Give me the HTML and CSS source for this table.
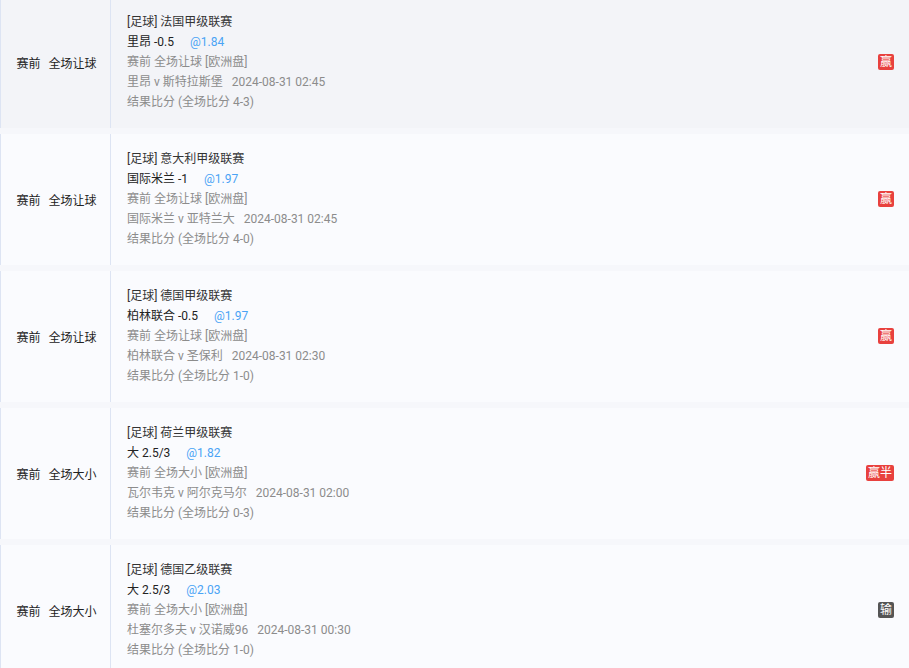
FILE: index.html
```html
<!DOCTYPE html>
<html lang="zh">
<head>
<meta charset="utf-8">
<link rel="stylesheet" href="styles.css">
</head>
<body>
<div class="list">
  <div class="row active">
    <div class="type"><span>赛前</span><span>全场让球</span></div>
    <div class="info">
      <div class="title">[足球] 法国甲级联赛</div>
      <div class="bet"><span>里昂 -0.5</span><span class="odds">@1.84</span></div>
      <div class="sub">赛前 全场让球 [欧洲盘]</div>
      <div class="sub"><span>里昂 v 斯特拉斯堡</span><span class="date">2024-08-31 02:45</span></div>
      <div class="sub">结果比分 (全场比分 4-3)</div>
    </div>
    <div class="result"><span class="badge win">赢</span></div>
  </div>
  <div class="row">
    <div class="type"><span>赛前</span><span>全场让球</span></div>
    <div class="info">
      <div class="title">[足球] 意大利甲级联赛</div>
      <div class="bet"><span>国际米兰 -1</span><span class="odds">@1.97</span></div>
      <div class="sub">赛前 全场让球 [欧洲盘]</div>
      <div class="sub"><span>国际米兰 v 亚特兰大</span><span class="date">2024-08-31 02:45</span></div>
      <div class="sub">结果比分 (全场比分 4-0)</div>
    </div>
    <div class="result"><span class="badge win">赢</span></div>
  </div>
  <div class="row">
    <div class="type"><span>赛前</span><span>全场让球</span></div>
    <div class="info">
      <div class="title">[足球] 德国甲级联赛</div>
      <div class="bet"><span>柏林联合 -0.5</span><span class="odds">@1.97</span></div>
      <div class="sub">赛前 全场让球 [欧洲盘]</div>
      <div class="sub"><span>柏林联合 v 圣保利</span><span class="date">2024-08-31 02:30</span></div>
      <div class="sub">结果比分 (全场比分 1-0)</div>
    </div>
    <div class="result"><span class="badge win">赢</span></div>
  </div>
  <div class="row">
    <div class="type"><span>赛前</span><span>全场大小</span></div>
    <div class="info">
      <div class="title">[足球] 荷兰甲级联赛</div>
      <div class="bet"><span>大 2.5/3</span><span class="odds">@1.82</span></div>
      <div class="sub">赛前 全场大小 [欧洲盘]</div>
      <div class="sub"><span>瓦尔韦克 v 阿尔克马尔</span><span class="date">2024-08-31 02:00</span></div>
      <div class="sub">结果比分 (全场比分 0-3)</div>
    </div>
    <div class="result"><span class="badge win">赢半</span></div>
  </div>
  <div class="row">
    <div class="type"><span>赛前</span><span>全场大小</span></div>
    <div class="info">
      <div class="title">[足球] 德国乙级联赛</div>
      <div class="bet"><span>大 2.5/3</span><span class="odds">@2.03</span></div>
      <div class="sub">赛前 全场大小 [欧洲盘]</div>
      <div class="sub"><span>杜塞尔多夫 v 汉诺威96</span><span class="date">2024-08-31 00:30</span></div>
      <div class="sub">结果比分 (全场比分 1-0)</div>
    </div>
    <div class="result"><span class="badge lose">输</span></div>
  </div>
</div>
</body>
</html>
```

FILE: styles.css
```css
html, body {
  margin: 0;
  padding: 0;
  background: #f6f7fb;
  font-family: Roboto, "Noto Sans CJK SC", sans-serif;
  font-size: 12px;
  overflow: hidden;
}

.list {
  display: flex;
  flex-direction: column;
  gap: 6px;
  margin-top: -3.5px;
}

.row {
  display: flex;
  align-items: stretch;
  height: 131px;
  background: #fafbfe;
}

.row.active {
  background: #f3f4f8;
}

.type {
  width: 107px;
  flex: none;
  border-left: 1px solid #dde4f3;
  border-right: 1px solid #dde4f3;
  display: flex;
  align-items: center;
  justify-content: center;
  gap: 8px;
  color: #222;
  padding-left: 2px;
}

.info {
  flex: 1;
  display: flex;
  flex-direction: column;
  justify-content: center;
  padding-left: 16px;
  line-height: 20px;
  color: #999;
}

.title {
  color: #333;
}

.bet {
  color: #222;
  display: flex;
  gap: 16px;
}

.odds {
  color: #4aa3f5;
}

.sub {
  color: #8c8c8c;
}

.date {
  margin-left: 9px;
}

.result {
  display: flex;
  align-items: center;
  padding-right: 15px;
}

.badge {
  display: inline-block;
  height: 16px;
  line-height: 16px;
  padding: 0 2px;
  min-width: 12px;
  text-align: center;
  color: #fff;
  border-radius: 2px;
  font-size: 12px;
}

.badge.win {
  background: #e8413e;
}

.badge.lose {
  background: #555;
}
```
